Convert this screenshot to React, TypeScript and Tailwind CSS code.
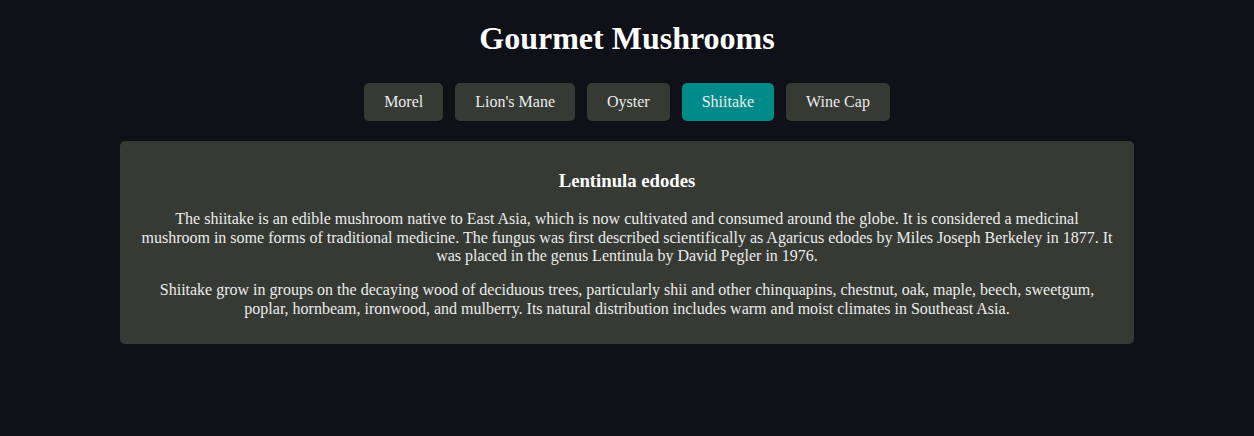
import React, { useState } from "react";

const tabs = ["Morel", "Lion's Mane", "Oyster", "Shiitake", "Wine Cap"];

export default function App() {
  const [active, setActive] = useState("Shiitake");
  return (
    <div
      className="min-h-[436px] w-full bg-[#0f1018] text-[#e8e8e8] flex flex-col items-center"
      style={{ fontFamily: '"Liberation Serif", "Times New Roman", serif' }}
    >
      <h1 className="mt-[20px] text-[32px] leading-[37px] font-bold text-white">Gourmet Mushrooms</h1>
      <div className="mt-[26px] flex gap-3">
        {tabs.map((t) => (
          <button
            key={t}
            onClick={() => setActive(t)}
            className={
              "h-[38px] px-5 rounded-[5px] text-[16px] leading-[18px] text-[#ececec] " +
              (t === active ? "bg-[#008b8b]" : "bg-[#363a33]")
            }
          >
            {t}
          </button>
        ))}
      </div>
      <div className="mt-5 w-[1014px] rounded-[5px] bg-[#363a33] px-5 pt-[10px] pb-[10px] text-center">
        <h3 className="mt-[19px] text-[18.72px] leading-[21.5px] font-bold text-white">Lentinula edodes</h3>
        <p className="mt-[18.7px] text-[16px] leading-[18.4px] text-[#ececec]">
          The shiitake is an edible mushroom native to East Asia, which is now cultivated and consumed around the globe. It is considered a medicinal mushroom in some forms of traditional medicine. The fungus was first described scientifically as Agaricus edodes by Miles Joseph Berkeley in 1877. It was placed in the genus Lentinula by David Pegler in 1976.
        </p>
        <p className="mt-4 mb-4 text-[16px] leading-[18.4px] text-[#ececec]">
          Shiitake grow in groups on the decaying wood of deciduous trees, particularly shii and other chinquapins, chestnut, oak, maple, beech, sweetgum, poplar, hornbeam, ironwood, and mulberry. Its natural distribution includes warm and moist climates in Southeast Asia.
        </p>
      </div>
    </div>
  );
}
